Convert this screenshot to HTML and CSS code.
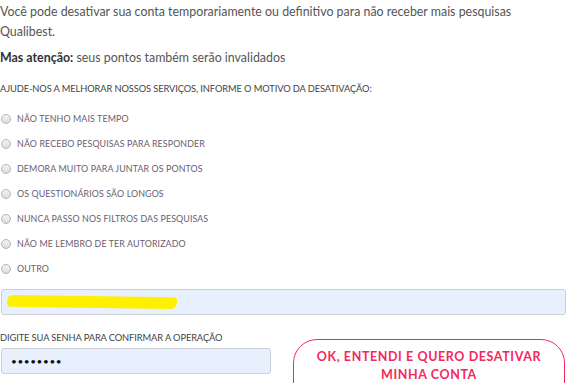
FILE: index.html
```html
<!DOCTYPE html>
<html lang="pt-BR">
<head>
<meta charset="utf-8">
<link rel="stylesheet" href="styles.css">
</head>
<body>
<div class="page">
  <p class="intro">Você pode desativar sua conta temporariamente ou definitivo para não receber mais pesquisas Qualibest.</p>
  <p class="warn"><strong>Mas atenção:</strong> seus pontos também serão invalidados</p>
  <h4 class="label">AJUDE-NOS A MELHORAR NOSSOS SERVIÇOS, INFORME O MOTIVO DA DESATIVAÇÃO:</h4>
  <ul class="options">
    <li><span class="radio"></span>NÃO TENHO MAIS TEMPO</li>
    <li><span class="radio"></span>NÃO RECEBO PESQUISAS PARA RESPONDER</li>
    <li><span class="radio"></span>DEMORA MUITO PARA JUNTAR OS PONTOS</li>
    <li><span class="radio"></span>OS QUESTIONÁRIOS SÃO LONGOS</li>
    <li><span class="radio"></span>NUNCA PASSO NOS FILTROS DAS PESQUISAS</li>
    <li><span class="radio"></span>NÃO ME LEMBRO DE TER AUTORIZADO</li>
    <li><span class="radio"></span>OUTRO</li>
  </ul>
  <div class="field wide"><span class="scribble"></span></div>
  <div class="bottom">
    <div class="pw">
      <h4 class="label">DIGITE SUA SENHA PARA CONFIRMAR A OPERAÇÃO</h4>
      <div class="field"><span class="dots">••••••••</span></div>
    </div>
    <button class="btn">OK, ENTENDI E QUERO DESATIVAR<br>MINHA CONTA</button>
  </div>
</div>
</body>
</html>
```
FILE: styles.css
```css
html, body { margin: 0; padding: 0; background: #fff; overflow: hidden; }
body { width: 566px; height: 383px; }
.page {
  font-family: "Lato", "Noto Sans", sans-serif;
  color: #555;
  width: 566px;
  height: 383px;
  overflow: hidden;
}
.intro { margin: 0; padding-top: 2px; font-size: 12.4px; line-height: 20px; }
.warn { margin: 6px 0 0; font-size: 12.4px; line-height: 20px; }
.warn strong { color: #333; font-weight: 700; }
.label { margin: 0; font-size: 9.3px; font-weight: 400; color: #444; letter-spacing: -0.1px; }
.page > .label { margin-top: 14px; line-height: 14px; }
.options { list-style: none; margin: 10px 0 0; padding: 0; }
.options li {
  display: flex; align-items: center; height: 25px;
  font-size: 8.9px; color: #6a6070; letter-spacing: 0.1px;
}
.radio {
  width: 8px; height: 8px; border-radius: 50%;
  border: 1px solid #b5b5b5; background: linear-gradient(#f4f4f4, #dcdcdc);
  margin: 0 6px 0 1px; flex: none;
}
.field {
  box-sizing: border-box; height: 26px; border: 1px solid #ccd0d6; border-radius: 3px;
  background: #e8f0fe; margin-left: 1px; display: flex; align-items: center;
}
.wide { margin-top: 8px; width: 565px; }
.scribble {
  display: block; width: 170px; height: 12px; margin-left: 5px;
  background: #ffef00; border-radius: 6px 3px 7px 4px;
  transform: rotate(0.8deg);
}
.bottom { display: flex; margin-top: 16px; }
.pw { width: 271px; flex: none; }
.pw .label { line-height: 14px; color: #444; }
.pw .field { margin-top: 3px; width: 270px; }
.dots { margin-left: 9px; font-size: 10px; color: #111; letter-spacing: 0.6px; }
.btn {
  margin-left: 22px; margin-top: 8px; width: 272px; height: 72px; flex: none;
  border: 1.5px solid #f2295b; border-radius: 24px; background: #fff;
  color: #f2295b; font-family: "Lato", sans-serif; font-size: 12.5px; font-weight: 700;
  letter-spacing: 0.6px; line-height: 18px; padding: 0 0 18px; align-self: flex-start; text-align: center;
  display: block;
}
```
